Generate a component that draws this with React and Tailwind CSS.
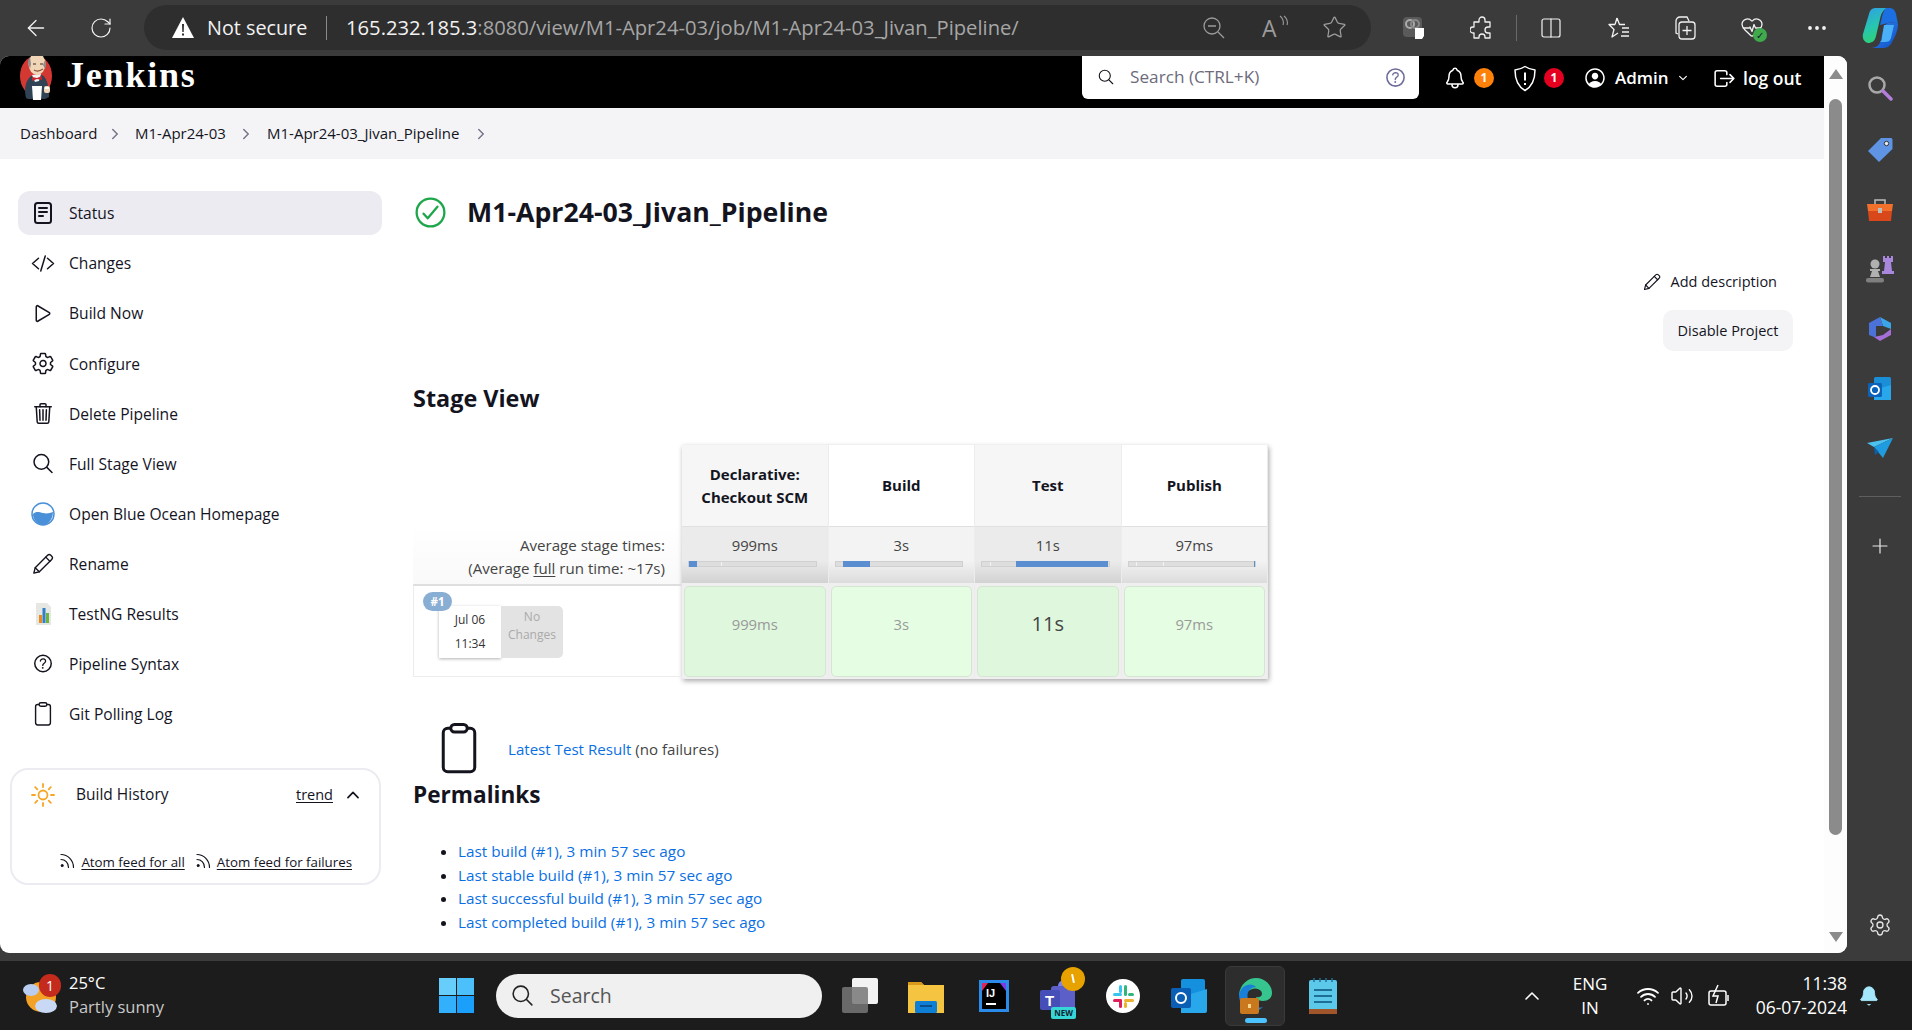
import {
  ArrowLeft, RotateCw, Star, Columns2, HeartPulse, MoreHorizontal, Plus, Settings, ChevronUp, Wifi, Volume2, Bell,
} from 'lucide-react';
import {
  IoCodeSlashOutline, IoPlayOutline, IoSettingsOutline, IoTrashOutline, IoSearchOutline,
  IoHelpCircleOutline, IoNotificationsOutline, IoPersonCircleOutline, IoLogOutOutline, IoChevronUp, IoChevronDown,
  IoChevronForward, IoCheckmarkCircleOutline,
} from 'react-icons/io5';

const StatusIcon = () => (
  <svg className="w-[24px] h-[24px]" viewBox="0 0 24 24" fill="none" stroke="#14141f" strokeWidth="2" strokeLinecap="round">
    <rect x="4" y="2" width="16" height="20" rx="2.5" />
    <path d="M8 7h8M8 11h8M8 15h4" />
  </svg>
);

const PencilIcon = ({ className }) => (
  <svg className={className} viewBox="0 0 24 24" fill="none" stroke="#14141f" strokeWidth="1.500" strokeLinejoin="round" strokeLinecap="round">
    <path d="M2 22l1.500-6L17 2.500a2.500 2.500 0 0 1 3.500 0l1 1a2.500 2.500 0 0 1 0 3.500L8 20.500z" />
    <path d="M3.500 16L8 20.500M15 4.500L19.500 9" />
  </svg>
);

const ClipboardIcon = ({ className }) => (
  <svg className={className} viewBox="0 0 24 34" fill="none" stroke="#14141f" strokeWidth="2" strokeLinejoin="round">
    <rect x="1.5" y="3.5" width="21" height="29" rx="3" />
    <rect x="6.5" y="1" width="11" height="5" rx="2.5" fill="#fff" />
  </svg>
);

const BlueOceanIcon = () => (
  <svg className="w-[24px] h-[24px]" viewBox="0 0 24 24">
    <circle cx="12" cy="12" r="11" fill="#fff" stroke="#4a90d9" strokeWidth="1.5" />
    <path d="M2 12c3-3 6-2 10-1s7 0 10-1c0 7-5 13-10 13S2 18 2 12z" fill="#4a90d9" />
  </svg>
);

const TestNgIcon = () => (
  <svg className="w-[24px] h-[24px]" viewBox="0 0 24 24">
    <path d="M5 1h11l4 4v18H5z" fill="#e6e6e2" />
    <rect x="8" y="13" width="3" height="8" fill="#e98b1f" />
    <rect x="11.500" y="6" width="3" height="15" fill="#2f7fc9" />
    <rect x="15" y="11" width="3" height="10" fill="#6db33f" />
  </svg>
);

const SunIcon = () => (
  <svg className="w-[24px] h-[24px]" viewBox="0 0 24 24" fill="none" stroke="#f5a623" strokeWidth="1.800" strokeLinecap="round">
    <circle cx="12" cy="12" r="4.500" />
    <path d="M12 1v3M12 20v3M1 12h3M20 12h3M4.200 4.200l2.100 2.100M17.700 17.700l2.100 2.100M4.200 19.800l2.100-2.100M17.700 6.300l2.100-2.100" />
  </svg>
);

const RssIcon = () => (
  <svg className="w-[15px] h-[16px] shrink-0 -mt-[4px]" viewBox="0 0 15 16" fill="none" stroke="#14141f" strokeWidth="1.200" strokeLinecap="round">
    <circle cx="2.200" cy="12.500" r="1.500" fill="#14141f" stroke="none" />
    <path d="M1 6.500c4 0 7.500 3.200 7.500 8M1 1.500c7 0 12.500 6 12.500 13" />
  </svg>
);

const navItems = [
  ['Status', <StatusIcon />],
  ['Changes', <IoCodeSlashOutline className="text-[25px]" />],
  ['Build Now', <IoPlayOutline className="text-[25px]" />],
  ['Configure', <IoSettingsOutline className="text-[25px]" />],
  ['Delete Pipeline', <IoTrashOutline className="text-[25px]" />],
  ['Full Stage View', <IoSearchOutline className="text-[25px]" />],
  ['Open Blue Ocean Homepage', <BlueOceanIcon />],
  ['Rename', <PencilIcon className="w-[22px] h-[22px]" />],
  ['TestNG Results', <TestNgIcon />],
  ['Pipeline Syntax', <IoHelpCircleOutline className="text-[27px]" />],
  ['Git Polling Log', <ClipboardIcon className="w-[18px] h-[24px]" />],
];

const stages = [
  { head: ['Declarative:', 'Checkout SCM'], avg: '999ms', left: 0, width: 6, ticks: [25], headBg: 'bg-[#f6f6f6]', avgBg: 'bg-linear-to-b from-[#ebebeb] from-60% to-[#d2d2d2]', cellBg: 'bg-[#dff7dd]', text: 'text-[14.800px] text-[#999]' },
  { head: ['Build'], avg: '3s', left: 6, width: 21, ticks: [], headBg: 'bg-white', avgBg: 'bg-linear-to-b from-[#f3f3f3] from-60% to-[#dcdcdc]', cellBg: 'bg-[#e5fde3]', text: 'text-[14.800px] text-[#999]' },
  { head: ['Test'], avg: '11s', left: 27, width: 73, ticks: [6], headBg: 'bg-[#f6f6f6]', avgBg: 'bg-linear-to-b from-[#ebebeb] from-60% to-[#d2d2d2]', cellBg: 'bg-[#dff7dd]', text: 'text-[20px] text-[#444]' },
  { head: ['Publish'], avg: '97ms', left: 99, width: 1, ticks: [6, 27], headBg: 'bg-white', avgBg: 'bg-linear-to-b from-[#f3f3f3] from-60% to-[#dcdcdc]', cellBg: 'bg-[#e5fde3]', text: 'text-[14.800px] text-[#999]' },
];

const permalinks = [
  'Last build (#1), 3 min 57 sec ago',
  'Last stable build (#1), 3 min 57 sec ago',
  'Last successful build (#1), 3 min 57 sec ago',
  'Last completed build (#1), 3 min 57 sec ago',
];

const JenkinsLogo = () => (
  <svg className="w-[32px] h-[44px] shrink-0" viewBox="0 0 32 44">
    <ellipse cx="16" cy="20" rx="16" ry="20" fill="#d33833" />
    <path d="M6 42c-2-8-1-17 5-22l11-1c5 3 7 11 7 22l-4 2H8z" fill="#2f4354" />
    <path d="M12 19l9-1-2 7-4 1z" fill="#f2f2f2" />
    <path d="M12 21l5 1 5-2v4l-5-1-5 2z" fill="#c4262b" />
    <ellipse cx="17" cy="8" rx="8.500" ry="11" fill="#f0d6b7" />
    <path d="M8.500 8c-1-2 0-5 1.500-7l1 7-1 5zM25 4c1 3 1 6 0 9l-2-4z" fill="#8d8d8d" />
    <path d="M13 8h3M20 8h3" stroke="#3a2a20" strokeWidth="1.200" />
    <path d="M14 14c3 2 6 1 9-1" stroke="#8c4f35" strokeWidth="1.200" fill="none" />
    <path d="M12 30h10l-1 14h-8z" fill="#fff" />
    <rect x="24" y="30" width="6" height="7" rx="2" fill="#f0d6b7" />
    <path d="M25 31h4v2h-4z" fill="#fff" />
  </svg>
);

const CopilotLogo = ({ className }) => (
  <svg className={className} viewBox="0 0 36 42">
    <defs>
      <linearGradient id="cpA" x1="0" y1="0" x2="0.300" y2="1">
        <stop offset="0" stopColor="#2f9ee8" />
        <stop offset="0.600" stopColor="#27c6b0" />
        <stop offset="1" stopColor="#2fd07a" />
      </linearGradient>
      <linearGradient id="cpB" x1="0" y1="0" x2="1" y2="1">
        <stop offset="0" stopColor="#2f7fe8" />
        <stop offset="1" stopColor="#0f52cc" />
      </linearGradient>
    </defs>
    <path d="M14 1h11c-4 2-6 6-7 11l-4 17c-1 5-4 7-8 7-4-1-6-5-5-9l6-20C8 3 10 1 14 1z" fill="url(#cpA)" />
    <path d="M25 1h2c4 0 6 2 7 6l2 10c-3-2-7-2-10-1l-8 2 2-8c1-4 2-8 5-9z" fill="#1b6fe0" />
    <path d="M26 16c4-1 8-1 10 1 0 6-3 13-6 18-2 4-5 6-9 6H9c5 0 9-3 10-8l2-9c1-4 2-7 5-8z" fill="url(#cpB)" />
    <path d="M22 18h10l-3 13c-1 3-3 4-6 4h-5c2-1 2-3 2-5z" fill="#4ab0f7" />
  </svg>
);

const TopBar = () => (
  <div className="h-[56px] shrink-0 flex items-center pt-[5px] pb-[6px] text-[#f2f2f2]">
    <ArrowLeft className="ml-[23px] w-[26px] h-[26px]" strokeWidth={1.200} />
    <RotateCw className="ml-[40px] w-[24px] h-[24px]" strokeWidth={1.200} />
    <div className="ml-[31px] w-[1227px] h-[45px] rounded-full bg-[#2e2e2e] flex items-center pl-[27px] pr-[24px]">
      <svg className="w-[24px] h-[23px] shrink-0" viewBox="0 0 24 23">
        <path d="M12 1l11 21H1z" fill="#fff" />
        <path d="M11 8h2l-.3 8h-1.400zM11 17.500h2v2h-2z" fill="#2e2e2e" />
      </svg>
      <span className="ml-[12px] w-[101px] text-[19.800px] whitespace-nowrap">Not secure</span>
      <span className="ml-[18px] w-px h-[24px] bg-[#8a8a8a]" />
      <span className="ml-[19px] text-[20.200px] whitespace-nowrap">
        165.232.185.3<span className="text-[#a6a6a6]">:8080/view/M1-Apr24-03/job/M1-Apr24-03_Jivan_Pipeline/</span>
      </span>
      <div className="ml-auto flex items-center gap-[37px] text-[#9c9c9c]">
        <svg className="w-[23px] h-[23px]" viewBox="0 0 23 23" fill="none" stroke="currentColor" strokeWidth="1.300">
          <circle cx="10" cy="10" r="8" />
          <path d="M6 10h8M16 16l6 6" />
        </svg>
        <div className="relative w-[23px] h-[26px] text-[23px] leading-[26px]">
          A
          <svg className="absolute right-[-4px] top-0 w-[10px] h-[12px]" viewBox="0 0 10 12" fill="none" stroke="currentColor" strokeWidth="1.100">
            <path d="M1 1c3 2 4 6 3 9M5 1c3 2 4 6 3 9" />
          </svg>
        </div>
        <Star className="w-[25px] h-[25px]" strokeWidth={1.200} />
      </div>
    </div>
    <svg className="ml-[32px] w-[22px] h-[24px]" viewBox="0 0 22 24">
      <rect x="0" y="1" width="19" height="20" rx="4" fill="#5a5a5a" />
      <circle cx="7" cy="8" r="4" fill="none" stroke="#aaa" strokeWidth="2" />
      <circle cx="12" cy="8" r="4" fill="none" stroke="#888" strokeWidth="2" />
      <path d="M12 12h9v8l-2 3h-7z" fill="#fff" />
    </svg>
    <svg className="ml-[45px] w-[24px] h-[24px]" viewBox="0 0 24 24" fill="none" stroke="currentColor" strokeWidth="1.300" strokeLinejoin="round">
      <path d="M9 4a3 3 0 0 1 6 0v2h5v5h-2a3 3 0 0 0 0 6h2v5h-5v-1a3 3 0 0 0-6 0v1H4v-5H3a3 3 0 0 1 0-6h1V6h5z" />
    </svg>
    <span className="ml-[22px] w-px h-[26px] bg-[#6a6a6a]" />
    <Columns2 className="ml-[22px] w-[24px] h-[24px]" strokeWidth={1.200} />
    <svg className="ml-[44px] w-[24px] h-[24px]" viewBox="0 0 24 24" fill="none" stroke="currentColor" strokeWidth="1.300" strokeLinejoin="round">
      <path d="M10 2l2.500 6.500H18M8 8.500H2l5 5-2 7.500 6-4M15 12h7M15 16h7M14 20h8M8 8.500L10 2" />
    </svg>
    <svg className="ml-[42px] w-[24px] h-[26px]" viewBox="0 0 24 26" fill="none" stroke="currentColor" strokeWidth="1.300">
      <rect x="6" y="7" width="16" height="17" rx="3" />
      <path d="M14 11v9M9.500 15.500h9M5 19l-2-1V6a4 4 0 0 1 4-4h7l2 4" />
    </svg>
    <div className="relative ml-[43px] w-[24px] h-[26px]">
      <HeartPulse className="w-[24px] h-[24px]" strokeWidth={1.300} />
      <span className="absolute right-[-3px] bottom-[-1px] w-[14px] h-[14px] rounded-full bg-[#3fa94b] text-[#123] text-[10px] leading-[14px] text-center">✓</span>
    </div>
    <MoreHorizontal className="ml-[41px] w-[24px] h-[24px]" strokeWidth={1.800} />
    <CopilotLogo className="ml-[33px] w-[36px] h-[42px]" />
  </div>
);

const PageHeader = () => (
  <header className="h-[52px] shrink-0 bg-black flex items-start pl-[20px] text-white">
    <JenkinsLogo />
    <span className="ml-[14px] mt-[-1px] text-[36px] leading-[40px] tracking-[1.800px] font-bold font-['Liberation_Serif',serif]">Jenkins</span>
    <div className="ml-auto w-[337px] h-[43px] bg-white rounded-b-[6px] flex items-center pl-[15px] pr-[11px] pb-[1px] text-[#14141f]">
      <IoSearchOutline className="text-[18px]" />
      <span className="ml-[15px] text-[17.200px] text-[#6d6b7b] whitespace-nowrap">Search (CTRL+K)</span>
      <IoHelpCircleOutline className="ml-auto text-[25px] text-[#6d6b9b]" />
    </div>
    <div className="self-stretch pb-[8px] flex items-center mr-[22px]">
      <IoNotificationsOutline className="ml-[24px] text-[24px]" />
      <span className="ml-[7px] w-[20px] h-[20px] rounded-full bg-[#fe820a] text-[12px] leading-[20px] text-center font-bold">1</span>
      <svg className="ml-[19px] w-[24px] h-[27px]" viewBox="0 0 24 27" fill="none" stroke="#fff" strokeWidth="1.500" strokeLinejoin="round">
        <path d="M12 1.500c3 2 6 3 10 3.500 0 9-2 16-10 20.500C4 21 2 14 2 5c4-.5 7-1.500 10-3.500z" />
        <path d="M12 7.500v8M12 18v2" strokeWidth="2" />
      </svg>
      <span className="ml-[7px] w-[20px] h-[20px] rounded-full bg-[#e6001f] text-[12px] leading-[20px] text-center font-bold">1</span>
      <IoPersonCircleOutline className="ml-[19px] text-[24px]" />
      <span className="ml-[8px] w-[54px] text-[17px] font-semibold whitespace-nowrap">Admin</span>
      <IoChevronDown className="ml-[8px] text-[12px]" />
      <IoLogOutOutline className="ml-[23px] text-[25px]" />
      <span className="ml-[6px] w-[59px] text-[17.500px] font-semibold whitespace-nowrap">log out</span>
    </div>
  </header>
);

const Breadcrumbs = () => (
  <nav className="h-[51px] shrink-0 bg-[#f4f4f6] flex items-center pl-[20px] text-[15px] text-[#14141f]">
    <span className="w-[75px] whitespace-nowrap">Dashboard</span>
    <IoChevronForward className="ml-[12px] text-[16px] text-[#77758a]" />
    <span className="ml-[12px] w-[91px] whitespace-nowrap">M1-Apr24-03</span>
    <IoChevronForward className="ml-[12px] text-[16px] text-[#77758a]" />
    <span className="ml-[13px] w-[195px] whitespace-nowrap">M1-Apr24-03_Jivan_Pipeline</span>
    <IoChevronForward className="ml-[11px] text-[16px] text-[#77758a]" />
  </nav>
);

const SideNav = () => (
  <aside className="w-[413px] shrink-0 pl-[10px] pt-[32px]">
    <div className="pl-[8px] w-[372px] flex flex-col gap-[6.100px]">
      {navItems.map(([label, icon], i) => (
        <div key={label} className={i === 0 ? 'h-[44px] rounded-[12px] bg-[#ebebf1] flex items-center text-[#14141f]' : 'h-[44px] rounded-[12px] flex items-center text-[#14141f]'}>
          <span className="w-[51px] pl-[13px] pr-[14px] flex items-center justify-center shrink-0">{icon}</span>
          <span className="pt-[2px] text-[15.600px] whitespace-nowrap">{label}</span>
        </div>
      ))}
    </div>
    <section className="mt-[32px] w-[371px] h-[117px] rounded-[18px] border-2 border-[#ebebf1] text-[#14141f]">
      <div className="pt-[13px] pl-[19px] pr-[17px] flex items-center h-[37px]">
        <SunIcon />
        <span className="ml-[21px] text-[15.500px] whitespace-nowrap">Build History</span>
        <span className="ml-auto underline underline-offset-2 text-[14.500px]">trend</span>
        <IoChevronUp className="ml-[11px] text-[18px]" />
      </div>
      <div className="mt-[46px] pr-[27px] flex justify-end items-center text-[13.300px]">
        <RssIcon />
        <span className="ml-[6px] underline underline-offset-2 whitespace-nowrap">Atom feed for all</span>
        <span className="ml-[11px]"><RssIcon /></span>
        <span className="ml-[6px] underline underline-offset-2 whitespace-nowrap">Atom feed for failures</span>
      </div>
    </section>
  </aside>
);

const StageView = () => (
  <div className="flex mt-[33px]">
    <div className="w-[269px] shrink-0 flex flex-col h-[234px]">
      <div className="mt-[81px] h-[58px] bg-linear-to-b from-white to-[#f9f9f9] text-right pr-[17px] pt-[8px] text-[15.100px] leading-[23px] text-[#444]">
        <div>Average stage times:</div>
        <div>(Average <span className="underline underline-offset-2">full</span> run time: ~17s)</div>
      </div>
      <div className="relative h-[93px] border border-[#ececec] border-t-2 border-t-[#dedede] border-r-0">
        <div className="absolute left-[25px] top-[20px] flex h-[52px]">
          <div className="w-[62px] bg-white shadow-[0_1px_3px_rgba(0,0,0,0.3)] flex flex-col items-center justify-between py-[5px] text-[12px] text-[#333]">
            <span>Jul 06</span>
            <span>11:34</span>
          </div>
          <div className="w-[62px] bg-[#e3e3e3] rounded-r-[5px] text-center text-[#aaa] text-[12px] leading-[18px] pt-[2px]">No<br />Changes</div>
        </div>
        <span className="absolute left-[9px] top-[6px] w-[29px] h-[19px] rounded-full bg-[#89aed3] text-white text-[11.500px] leading-[19px] text-center font-bold">#1</span>
      </div>
    </div>
    <div className="w-[586px] h-[234px] grid grid-cols-4 bg-[#efefef] shadow-[1px_2px_5px_rgba(0,0,0,0.35)]">
      {stages.map((s) => (
        <div key={s.avg} className="flex flex-col border-r border-[#ececec]">
          <div className={`h-[81px] ${s.headBg} flex flex-col items-center justify-center text-[15px] leading-[23px] font-bold text-[#14141f]`}>
            {s.head.map((line) => <div key={line}>{line}</div>)}
          </div>
          <div className={`h-[57px] ${s.avgBg} border-t border-[#e0e0e0] pl-[6px] pr-[11px] pt-[8px]`}>
            <div className="pl-[5px] text-center text-[14.800px] leading-[20px] text-[#444]">{s.avg}</div>
            <div className="relative mt-[6px] h-[6px] bg-[#dedede] border border-[#d0d0d0]">
              {s.ticks.map((t) => <span key={t} className="absolute top-0 bottom-0 w-px bg-[#f4f4f4]" style={{ left: `${t}%` }} />)}
              <div className="absolute top-[-1px] bottom-[-1px] bg-[#5b8ed1]" style={{ left: `${s.left}%`, width: `${s.width}%` }} />
            </div>
          </div>
          <div className="flex-1 p-[2px] pt-[3px] bg-[#efefef]">
            <div className={`h-full rounded-[5px] border border-[#d4e6d2] ${s.cellBg} flex items-center justify-center pb-[15px] ${s.text}`}>{s.avg}</div>
          </div>
        </div>
      ))}
    </div>
  </div>
);

const MainContent = () => (
  <main className="flex-1 min-w-0 pt-[33px] pr-[31px] text-[#14141f]">
    <div className="h-[40px] flex items-center">
      <IoCheckmarkCircleOutline className="ml-[-1px] text-[37px] text-[#1ea64b]" />
      <h1 className="ml-[18px] text-[26.700px] font-bold whitespace-nowrap">M1-Apr24-03_Jivan_Pipeline</h1>
    </div>
    <div className="mt-[38px] flex flex-col items-end">
      <div className="h-[24px] mr-[16px] flex items-center text-[14.500px]">
        <PencilIcon className="w-[18px] h-[18px] mr-[10px]" />
        Add description
      </div>
      <button className="mt-[16px] w-[130px] h-[41px] rounded-[10px] bg-[#f4f4f6] text-[14.500px]">Disable Project</button>
    </div>
    <h2 className="mt-[33px] h-[28px] text-[23.400px] leading-[28px] font-bold">Stage View</h2>
    <StageView />
    <div className="mt-[44px] flex items-center h-[51px] pl-[28px]">
      <ClipboardIcon className="w-[36px] h-[51px]" />
      <div className="ml-[31px] mt-[1px] text-[15.100px] text-[#444] whitespace-nowrap">
        <span className="text-[#0b6fe4] font-medium">Latest Test Result</span> (no failures)
      </div>
    </div>
    <h2 className="mt-[7px] h-[28px] text-[22.600px] leading-[28px] font-bold">Permalinks</h2>
    <ul className="mt-[31px] pl-[45px] list-disc text-[15.300px] leading-[23.700px] text-[#14141f]">
      {permalinks.map((p) => (
        <li key={p}><span className="text-[#0b6fe4] font-medium">{p}</span></li>
      ))}
    </ul>
  </main>
);

const ScrollBar = () => (
  <div className="w-[23px] shrink-0 bg-[#fdfdfd] flex flex-col items-center pt-[13px] pb-[11px]">
    <span className="w-0 h-0 border-x-[7px] border-x-transparent border-b-[10px] border-b-[#8b8b8b]" />
    <span className="mt-[20px] w-[13px] h-[736px] rounded-full bg-[#8b8b8b]" />
    <span className="mt-auto w-0 h-0 border-x-[7px] border-x-transparent border-t-[10px] border-t-[#8b8b8b]" />
  </div>
);

const EdgeSidebar = () => (
  <div className="w-[65px] shrink-0 flex flex-col items-center pt-[19px] pb-[24px]">
    <svg className="w-[26px] h-[26px]" viewBox="0 0 26 26" fill="none">
      <circle cx="10" cy="10" r="7.500" stroke="#a8a8a8" strokeWidth="2.500" />
      <path d="M16 16l8 8" stroke="#b57edc" strokeWidth="3.500" strokeLinecap="round" />
    </svg>
    <svg className="mt-[36px] w-[26px] h-[26px]" viewBox="0 0 26 26">
      <path d="M14 1h10c1 0 1.500 1 1.500 2v9L12 25 1 14z" fill="#5f93e4" />
      <circle cx="19.500" cy="6.500" r="2.200" fill="#e8eefc" stroke="#333" />
    </svg>
    <svg className="mt-[35px] w-[28px] h-[24px]" viewBox="0 0 28 24">
      <path d="M9 6V2h10v4" fill="none" stroke="#bdbdbd" strokeWidth="1.500" />
      <path d="M1 6h26l-1 7H2z" fill="#f0702c" />
      <path d="M2 13h24l-1 10H3z" fill="#d9481a" />
      <rect x="12" y="10" width="4" height="5" fill="#bdbdbd" />
    </svg>
    <svg className="mt-[33px] w-[28px] h-[28px]" viewBox="0 0 28 28">
      <path d="M17 1h2v2h2V1h2v2h2V1h2v6h-2l1 9h2v3H16v-3h2l1-9h-2z" fill="#a987dc" />
      <circle cx="9" cy="9" r="4.500" fill="#b0b0b0" />
      <path d="M4 14h10v2h-2l2 6H4l2-6H4z" fill="#b0b0b0" />
      <rect x="0" y="23" width="18" height="4.500" rx="2" fill="#7f7f7f" />
    </svg>
    <svg className="mt-[33px] w-[26px] h-[26px]" viewBox="0 0 26 26">
      <path d="M13 1l11 6v6l-8-3-3-9z" fill="#3aa5e8" />
      <path d="M24 13v6l-11 6-6-4 9-2z" fill="#a56fd8" />
      <path d="M2 7l11-6 3 9-7 5v6l-2 0-5-2z" fill="#4a72d8" />
      <path d="M9 10l7 0 0 7-7 0z" fill="#3b3b3b" />
    </svg>
    <svg className="mt-[34px] w-[26px] h-[26px]" viewBox="0 0 26 26">
      <rect x="7" y="1" width="17" height="23" rx="1.500" fill="#1a8fd8" />
      <path d="M7 14l17-5v15H7z" fill="#28a8ea" />
      <rect x="1" y="7" width="14" height="14" rx="1.500" fill="#0a63b8" />
      <circle cx="8" cy="14" r="4" fill="none" stroke="#fff" strokeWidth="1.800" />
    </svg>
    <svg className="mt-[36px] w-[26px] h-[20px]" viewBox="0 0 26 20">
      <path d="M0 5l26-5-19 9z" fill="#4cc2f1" />
      <path d="M26 0L16 20l-9-11z" fill="#1f9cdf" />
      <path d="M7 9l1 8 4-3z" fill="#0f5fa8" />
    </svg>
    <span className="mt-[38px] w-[42px] h-px bg-[#5e5e5e]" />
    <Plus className="mt-[37px] w-[24px] h-[24px] text-[#e8e8e8]" strokeWidth={1.200} />
    <Settings className="mt-auto w-[24px] h-[24px] text-[#e8e8e8]" strokeWidth={1.300} />
  </div>
);

const Taskbar = () => (
  <footer className="h-[69px] shrink-0 bg-[#1c1c1c] flex items-center text-white">
    <div className="relative ml-[22px] w-[38px] h-[36px] shrink-0">
      <svg className="w-[38px] h-[36px]" viewBox="0 0 38 36">
        <circle cx="19" cy="19" r="15" fill="#f3a225" />
        <ellipse cx="9" cy="12" rx="8" ry="6" fill="#b9cdf0" />
        <ellipse cx="24" cy="28" rx="11" ry="7" fill="#c8d8f5" />
      </svg>
      <span className="absolute left-[17px] top-[-4px] w-[22px] h-[23px] rounded-full bg-[#c42b1c] text-[14px] leading-[23px] text-center">1</span>
    </div>
    <div className="ml-[9px] mb-[2px] w-[100px] text-[16.500px] leading-[24px]">
      <div>25°C</div>
      <div className="text-[#c8c8c8] whitespace-nowrap">Partly sunny</div>
    </div>
    <div className="ml-[270px] w-[35px] h-[35px] grid grid-cols-2 gap-[1px] shrink-0">
      <span className="bg-[#67cdfb]" />
      <span className="bg-[#4cc0fa]" />
      <span className="bg-[#32b0fb]" />
      <span className="bg-[#1aa0fb]" />
    </div>
    <div className="ml-[22px] w-[326px] h-[44px] rounded-full bg-[#f0f0f0] flex items-center pl-[14px] text-[#555]">
      <IoSearchOutline className="text-[25px] text-[#222]" />
      <span className="ml-[15px] text-[19.500px]">Search</span>
    </div>
    <svg className="ml-[20px] w-[36px] h-[35px]" viewBox="0 0 36 35">
      <rect x="10" y="0" width="26" height="26" rx="2" fill="#f2f2f2" />
      <rect x="0" y="9" width="26" height="26" rx="2" fill="#777" fillOpacity="0.85" />
    </svg>
    <svg className="ml-[30px] w-[36px] h-[34px]" viewBox="0 0 36 34">
      <path d="M0 3h13l3 3h20v28H0z" fill="#f5c542" />
      <path d="M0 3h13l3 3H0z" fill="#d99a1c" />
      <rect x="7" y="22" width="22" height="12" rx="1.500" fill="#0f7fd6" />
      <rect x="12" y="26" width="12" height="2" fill="#0a4f8c" />
    </svg>
    <svg className="ml-[35px] w-[30px] h-[32px]" viewBox="0 0 30 32">
      <rect width="30" height="32" fill="#2a8be8" />
      <rect x="3" y="3" width="24" height="26" fill="#000" />
      <path d="M3 3h6l-6 8z" fill="#e0245e" />
      <path d="M27 3v8l-6-8z" fill="#7c3aed" />
      <text x="7" y="17" fontSize="11" fontWeight="700" fill="#fff" fontFamily="Liberation Sans">IJ</text>
      <rect x="7" y="23" width="10" height="2" fill="#fff" />
    </svg>
    <div className="relative ml-[31px] w-[36px] h-[40px]">
      <svg className="w-[36px] h-[36px]" viewBox="0 0 36 36">
        <circle cx="24" cy="10" r="6" fill="#7b83eb" />
        <rect x="11" y="10" width="24" height="24" rx="3" fill="#5b5fc7" />
        <rect x="0" y="14" width="20" height="20" rx="2" fill="#464eb8" />
        <text x="5" y="30" fontSize="15" fontWeight="700" fill="#fff" fontFamily="Liberation Sans">T</text>
      </svg>
      <span className="absolute left-[21px] top-[-9px] w-[24px] h-[24px] rounded-full bg-[#e8a200] flex items-center justify-center">
        <span className="w-[2px] h-[9px] bg-white -rotate-12" />
      </span>
      <span className="absolute left-[11px] bottom-[-3px] w-[25px] h-[12px] rounded-[2px] bg-[#37d6d6] text-[#123] text-[8px] leading-[12px] text-center font-bold">NEW</span>
    </div>
    <svg className="ml-[30px] w-[34px] h-[34px]" viewBox="0 0 34 34">
      <circle cx="17" cy="17" r="17" fill="#fff" />
      <rect x="7" y="14" width="9" height="3" rx="1.500" fill="#36c5f0" />
      <rect x="13" y="6" width="3" height="8" rx="1.500" fill="#36c5f0" />
      <rect x="18" y="6" width="3" height="11" rx="1.500" fill="#2eb67d" />
      <rect x="22" y="14" width="6" height="3" rx="1.500" fill="#2eb67d" />
      <rect x="18" y="20" width="10" height="3" rx="1.500" fill="#ecb22e" />
      <rect x="18" y="23" width="3" height="6" rx="1.500" fill="#ecb22e" />
      <rect x="7" y="20" width="9" height="3" rx="1.500" fill="#e01e5a" />
      <rect x="13" y="20" width="3" height="9" rx="1.500" fill="#e01e5a" />
    </svg>
    <svg className="ml-[31px] w-[36px] h-[34px]" viewBox="0 0 36 34">
      <rect x="10" y="0" width="24" height="34" rx="2" fill="#1490df" />
      <path d="M10 18l26-8v22a2 2 0 0 1-2 2H10z" fill="#28a8ea" />
      <rect x="0" y="9" width="20" height="20" rx="2" fill="#0a5fb4" />
      <circle cx="10" cy="19" r="5" fill="none" stroke="#fff" strokeWidth="2" />
    </svg>
    <div className="relative ml-[18px] w-[60px] h-[60px] rounded-[6px] bg-[#2d2d2d] border border-[#3a3a3a] flex items-center justify-center">
      <svg className="w-[36px] h-[38px]" viewBox="0 0 36 38">
        <path d="M2 18C3 7 11 1 19 1c9 0 16 7 16 15 0 5-4 8-9 8-3 0-6-1-7-4 6 1 7-3 5-6-4-5-15-3-17 8z" fill="#36c58f" />
        <path d="M2 18c2-11 13-13 17-8-6 0-10 5-8 12 2 7 8 10 15 8-6 6-14 6-19 1-3-3-5-8-5-13z" fill="#1a7fd8" />
        <rect x="3" y="21" width="19" height="16" rx="2" fill="#c9781d" />
        <rect x="11" y="27" width="3" height="4" fill="#f5d58a" />
      </svg>
      <span className="absolute bottom-[2px] left-[19px] w-[22px] h-[5px] rounded-full bg-[#4cc2ff]" />
    </div>
    <svg className="ml-[24px] w-[28px] h-[36px]" viewBox="0 0 28 36">
      <rect y="2" width="28" height="34" rx="2" fill="#5cc8ea" />
      <rect y="31" width="28" height="5" fill="#a0552a" />
      <path d="M5 12h18M5 18h18M5 24h18" stroke="#1d6f96" strokeWidth="2" />
      <path d="M5 0v4M11 0v4M17 0v4M23 0v4" stroke="#1d6f96" strokeWidth="1.500" />
    </svg>
    <ChevronUp className="ml-[183px] w-[24px] h-[24px]" strokeWidth={1.600} />
    <div className="ml-[26px] w-[40px] text-center text-[17px] leading-[24px]">
      <div>ENG</div>
      <div>IN</div>
    </div>
    <Wifi className="ml-[26px] w-[24px] h-[24px]" strokeWidth={1.800} />
    <Volume2 className="ml-[10px] w-[24px] h-[24px]" strokeWidth={1.400} />
    <svg className="ml-[13px] w-[24px] h-[24px]" viewBox="0 0 24 24" fill="none" stroke="#fff" strokeWidth="1.500">
      <rect x="2" y="7" width="17" height="14" rx="2" />
      <path d="M21 11v6M11 1L6 12h5l-2 7" />
    </svg>
    <div className="ml-[20px] mb-[2px] w-[96px] text-right text-[17.500px] leading-[24px] whitespace-nowrap">
      <div>11:38</div>
      <div>06-07-2024</div>
    </div>
    <Bell className="ml-[11px] w-[22px] h-[26px] text-[#a5e8fb] fill-[#a5e8fb]" strokeWidth={1} />
  </footer>
);

export default function App() {
  return (
    <div className="w-[1912px] h-[1030px] overflow-hidden flex flex-col bg-[#3b3b3b] font-['Open_Sans',sans-serif]">
      <TopBar />
      <div className="flex h-[905px] shrink-0">
        <div className="w-[1847px] h-[897px] shrink-0 flex rounded-[9px] overflow-hidden bg-white">
          <div className="w-[1824px] shrink-0 flex flex-col">
            <PageHeader />
            <Breadcrumbs />
            <div className="flex flex-1 min-h-0">
              <SideNav />
              <MainContent />
            </div>
          </div>
          <ScrollBar />
        </div>
        <EdgeSidebar />
      </div>
      <Taskbar />
    </div>
  );
}
